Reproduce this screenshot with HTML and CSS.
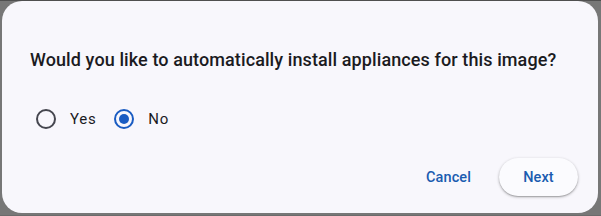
FILE: index.html
```html
<!DOCTYPE html>
<html lang="en">
<head>
    <meta charset="UTF-8">
    <title>Install appliances</title>
    <link rel="stylesheet" href="styles.css">
</head>
<body>
    <div class="backdrop">
        <!-- Dialog -->
        <div class="dialog">
            <h2 class="dialog-title">Would you like to automatically install appliances for this image?</h2>
            <div class="radio-group">
                <label class="radio-option">
                    <input type="radio" name="install" value="yes">
                    <span class="radio-mark"></span>
                    <span class="radio-label">Yes</span>
                </label>
                <label class="radio-option">
                    <input type="radio" name="install" value="no" checked>
                    <span class="radio-mark"></span>
                    <span class="radio-label">No</span>
                </label>
            </div>
            <div class="dialog-actions">
                <button class="btn-text">Cancel</button>
                <button class="btn-elevated">Next</button>
            </div>
        </div>
    </div>
</body>
</html>
```

FILE: styles.css
```css
/* Global Styles */
body {
    margin: 0;
    padding: 0;
    font-family: Roboto, "Noto Sans", Arial, sans-serif;
    background: #6b6b6b;
    width: 601px;
    height: 216px;
    overflow: hidden;
}
.backdrop {
    padding: 1px 0 0 2px;
    height: 215px;
    box-sizing: border-box;
    background: linear-gradient(to bottom, #4f4f4f 0, #4f4f4f 1px, #777 1px);
}
.dialog {
    width: 596px;
    height: 212px;
    box-sizing: border-box;
    background: #f8f7fc;
    border-radius: 20px;
    padding: 46px 20px 0 28px;
    display: flex;
    flex-direction: column;
}
.dialog-title {
    margin: 0;
    font-size: 18px;
    font-weight: 500;
    line-height: 26px;
    color: #1b1b1f;
    letter-spacing: 0.1px;
}
.radio-group {
    display: flex;
    gap: 12px;
    margin-top: 36px;
    height: 20px;
    align-items: center;
}
.radio-option {
    display: flex;
    align-items: center;
    cursor: pointer;
}
.radio-option input {
    display: none;
}
.radio-mark {
    width: 20px;
    height: 20px;
    box-sizing: border-box;
    border: 2px solid #45464f;
    border-radius: 50%;
    margin-left: 6px;
    margin-right: 14px;
    display: flex;
    align-items: center;
    justify-content: center;
}
.radio-option input:checked + .radio-mark {
    border-color: #1a5cc2;
}
.radio-option input:checked + .radio-mark::after {
    content: "";
    width: 10px;
    height: 10px;
    border-radius: 50%;
    background: #1a5cc2;
}
.radio-label {
    font-size: 15px;
    letter-spacing: 0.7px;
    color: #1b1b1f;
}
.dialog-actions {
    display: flex;
    justify-content: flex-end;
    align-items: center;
    gap: 8px;
    margin-top: 29px;
}
button {
    font-family: Roboto, "Noto Sans", Arial, sans-serif;
    font-size: 14.5px;
    font-weight: 500;
    letter-spacing: 0.1px;
    color: #1a5cb0;
    border: none;
    cursor: pointer;
    height: 38px;
    border-radius: 19px;
}
.btn-text {
    background: transparent;
    padding: 0 20px;
}
.btn-elevated {
    background: #fbfbfe;
    width: 79px;
    padding: 0;
    box-shadow: 0 1px 3px rgba(0, 0, 0, 0.3), 0 1px 1px rgba(0, 0, 0, 0.15);
}
```
